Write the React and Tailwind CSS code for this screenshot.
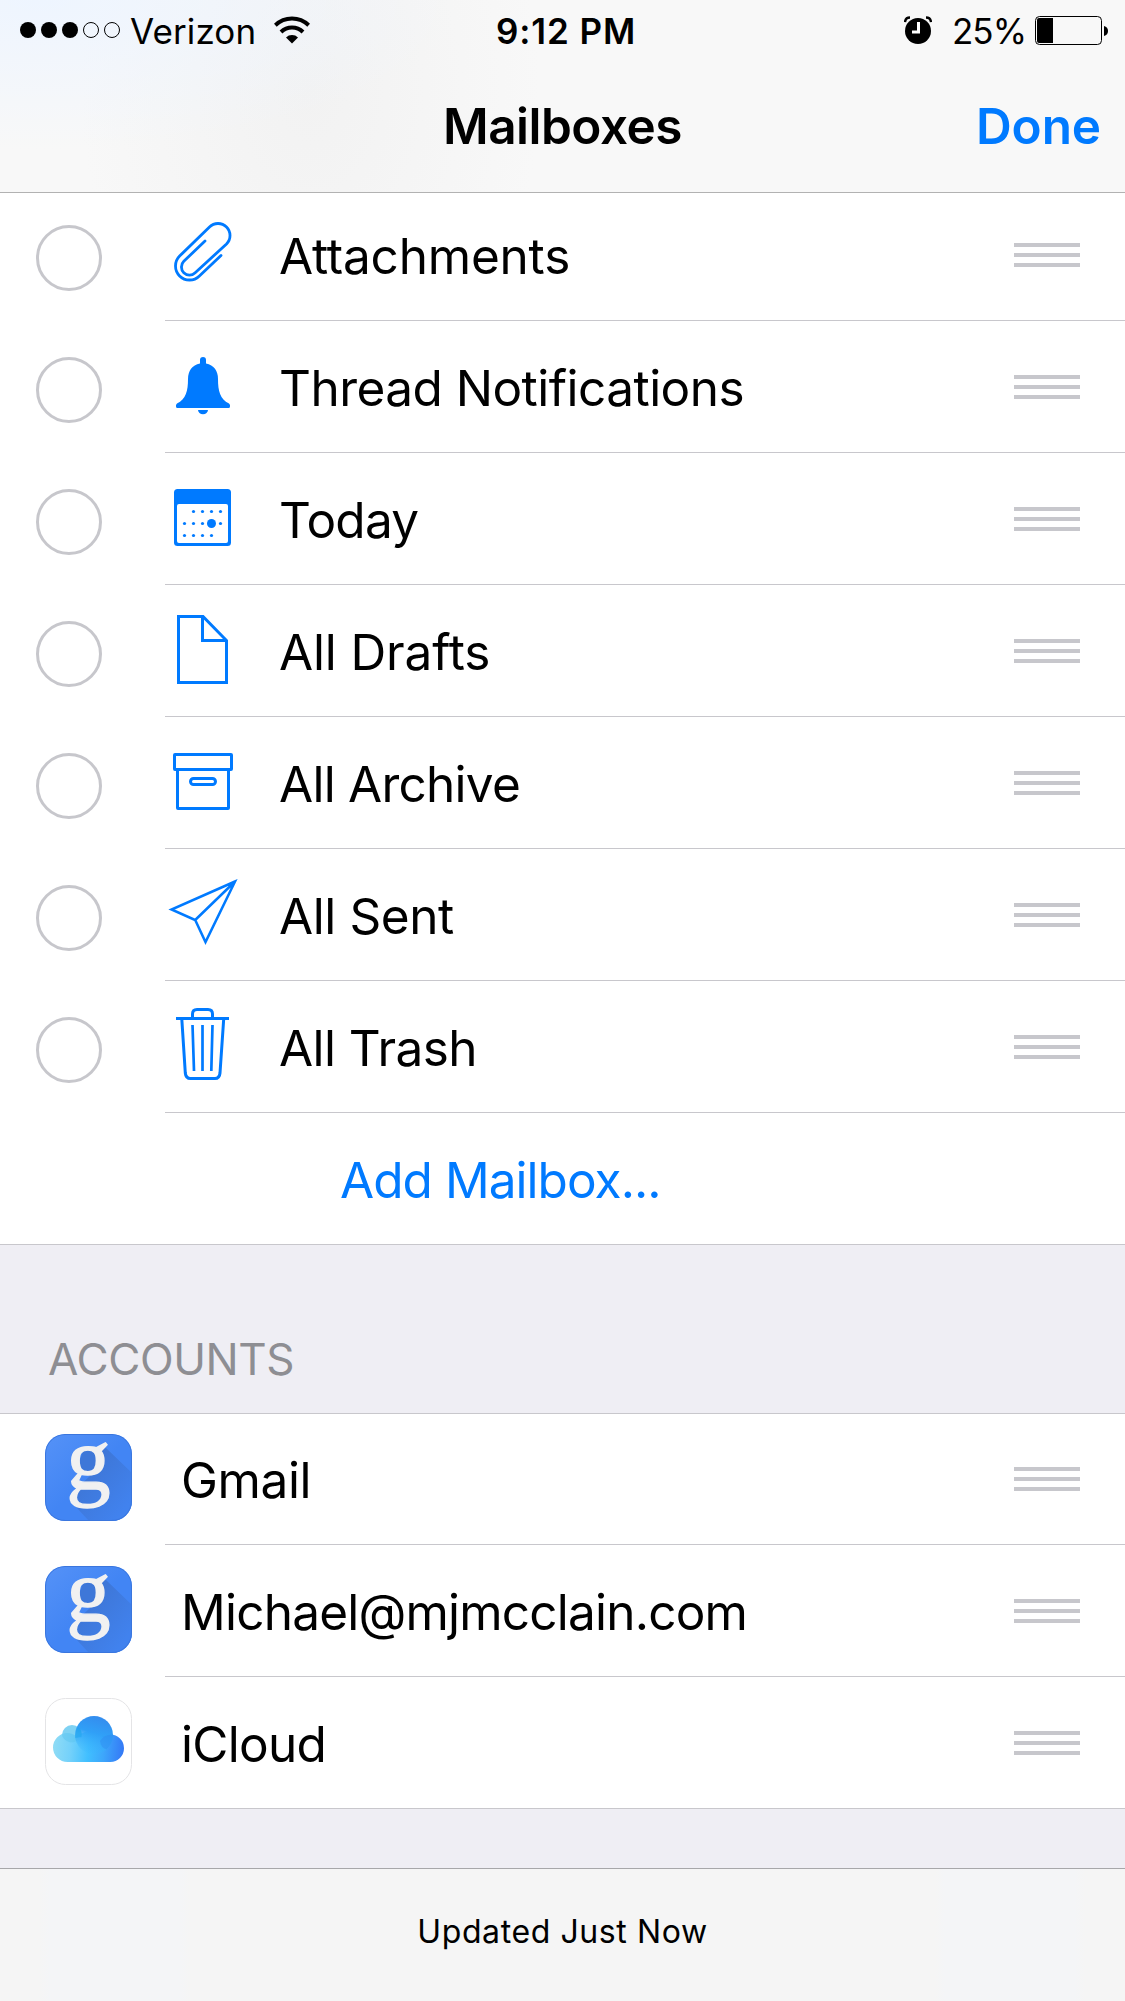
import { useState } from "react";

const MAILBOXES = [
  { name: "Attachments", icon: PaperclipIcon, text: "tracking-[-0.2px]" },
  { name: "Thread Notifications", icon: BellIcon, text: "tracking-[-0.53px]" },
  { name: "Today", icon: CalendarIcon, text: "tracking-[-0.7px]" },
  { name: "All Drafts", icon: DraftIcon, text: "tracking-[-0.15px]" },
  { name: "All Archive", icon: ArchiveIcon, text: "tracking-[-0.75px]" },
  { name: "All Sent", icon: SentIcon, text: "tracking-[-0.4px]" },
  { name: "All Trash", icon: TrashIcon, text: "tracking-[-0.55px]" },
];

const ACCOUNTS = [
  { name: "Gmail", icon: GoogleIcon, text: "tracking-[-0.4px]" },
  { name: "Michael@mjmcclain.com", icon: GoogleIcon, text: "tracking-[-0.78px]" },
  { name: "iCloud", icon: ICloudIcon, text: "tracking-[-0.7px]" },
];

export default function App() {
  const [selected, setSelected] = useState([]);

  const toggle = (name) => {
    setSelected((prev) =>
      prev.includes(name) ? prev.filter((n) => n !== name) : [...prev, name]
    );
  };

  return (
    <div className="flex flex-col w-[1125px] h-[2001px] overflow-hidden bg-[#efeef4] text-black font-['Inter','Liberation_Sans',sans-serif]">
      <header className="relative z-10 shrink-0 h-[193px] border-b border-[#b2b2b2] bg-[#f8f8f8] bg-[radial-gradient(ellipse_420px_150px_at_40px_0px,#eef5ff,transparent),radial-gradient(ellipse_230px_330px_at_310px_90px,#f2f2f2,transparent)]">
        <StatusBar />
        <div className="grid grid-cols-3 items-center h-[132px] pb-[1px] px-[24px] text-[49.5px] leading-[60px] font-semibold">
          <span />
          <h1 className="text-center tracking-[-0.5px]">Mailboxes</h1>
          <button className="text-right text-[#007aff] tracking-[-0.1px]">Done</button>
        </div>
      </header>

      <main className="grow">
        <section className="-mt-1 bg-white border-b border-[#c8c7cc]">
          {MAILBOXES.map((box) => (
            <MailboxRow
              key={box.name}
              box={box}
              checked={selected.includes(box.name)}
              onToggle={() => toggle(box.name)}
            />
          ))}
          <div className="flex h-[131px] items-center pt-[3px] pl-[340px]">
            <button className="text-[49.5px] leading-[60px] text-[#007aff] tracking-[-0.95px]">
              Add Mailbox...
            </button>
          </div>
        </section>

        <h2 className="h-[168px] pt-[84px] pl-[48px] text-[44px] leading-[60px] text-[#8e8e93] tracking-[-0.4px]">
          ACCOUNTS
        </h2>

        <section className="bg-white border-y border-[#c8c7cc]">
          {ACCOUNTS.map((account) => (
            <AccountRow key={account.name} account={account} />
          ))}
        </section>
      </main>

      <footer className="flex shrink-0 h-[133px] items-center justify-center border-t border-[#a7a7aa] bg-[#f5f5f5] bg-[linear-gradient(90deg,transparent_40px,#f4f5f7_50px,#f4f5f7_180px,transparent_190px,transparent_935px,#f4f5f7_945px,#f4f5f7_1075px,transparent_1085px)] pb-[7px]">
        <p className="text-[32px] leading-[40px] tracking-[0.6px]">Updated Just Now</p>
      </footer>
    </div>
  );
}

function StatusBar() {
  return (
    <div className="flex h-[60px] items-center pl-[20px] pr-[17px] text-[35px] leading-[40px]">
      <div className="flex flex-1 items-center">
        <div className="flex gap-[5px]">
          <span className="size-4 rounded-full bg-black" />
          <span className="size-4 rounded-full bg-black" />
          <span className="size-4 rounded-full bg-black" />
          <span className="size-4 rounded-full border border-black" />
          <span className="size-4 rounded-full border border-black" />
        </div>
        <span className="ml-[10px] mt-[2px] tracking-[0.1px]">Verizon</span>
        <WifiIcon />
      </div>
      <span className="ml-[4px] mt-[2px] font-semibold tracking-[0.9px]">9:12 PM</span>
      <div className="flex flex-1 items-center justify-end">
        <AlarmIcon />
        <span className="ml-[20px] mt-[2px] tracking-[-1px]">25%</span>
        <BatteryIcon />
      </div>
    </div>
  );
}

function MailboxRow({ box, checked, onToggle }) {
  const Icon = box.icon;
  return (
    <div className="flex h-[132px] pl-[36px]">
      <button
        onClick={onToggle}
        aria-label={box.name}
        className={`mt-[36px] size-[66px] shrink-0 rounded-full border-3 border-[#c7c7cc] ${checked ? "bg-[#007aff]" : ""}`}
      />
      <div className="ml-[63px] flex grow border-b border-[#c8c7cc] pr-[45px]">
        <Icon />
        <span className={`ml-[39px] mt-[37px] grow text-[49.5px] leading-[60px] ${box.text}`}>{box.name}</span>
        <Grip />
      </div>
    </div>
  );
}

function AccountRow({ account }) {
  const Icon = account.icon;
  return (
    <div className="group flex h-[132px] pl-[45px] first:-mt-px last:h-[131px]">
      <Icon />
      <div className="ml-[33px] flex grow border-b border-[#c8c7cc] pr-[45px] group-last:border-b-0">
        <span className={`ml-[16px] mt-[37px] grow text-[49.5px] leading-[60px] ${account.text}`}>
          {account.name}
        </span>
        <Grip />
      </div>
    </div>
  );
}

function Grip() {
  return (
    <div className="mt-[54px] flex w-[66px] shrink-0 flex-col gap-[6px]">
      <span className="h-1 bg-[#c7c7cc]" />
      <span className="h-1 bg-[#c7c7cc]" />
      <span className="h-1 bg-[#c7c7cc]" />
    </div>
  );
}

function IconBox({ children }) {
  return (
    <svg viewBox="0 0 75 84" className="mt-[24px] h-[84px] w-[75px] shrink-0" fill="none" stroke="#007aff" strokeWidth="3">
      {children}
    </svg>
  );
}

function PaperclipIcon() {
  return (
    <IconBox>
      <path
        d="M40 28 L18.8 48.3 A8 8 0 0 0 30.2 59.7 L61.5 31 A12 12 0 0 0 44.5 14 L14.6 43.1 A14 14 0 0 0 34.4 62.9 L56 42.5"
        strokeWidth="2.8"
        strokeLinecap="round"
      />
    </IconBox>
  );
}

function BellIcon() {
  return (
    <IconBox>
      <path
        d="M35 15 a3 3 0 0 1 6 0 V18.5 C49 20 53 26 53 34 C53 46 55 54 64 58.5 Q65 59.3 65 60.5 V61.5 Q65 63 63.5 63 H12.5 Q11 63 11 61.5 V60.5 Q11 59.3 12 58.5 C21 54 23 46 23 34 C23 26 27 20 35 18.5 Z"
        fill="#007aff"
        stroke="none"
      />
      <path d="M33 65 H43 A5 4.2 0 0 1 33 65 Z" fill="#007aff" stroke="none" />
    </IconBox>
  );
}

const DAYS = [
  [28.5, 34.5], [37.5, 34.5], [46.5, 34.5], [55.5, 34.5],
  [19.5, 46.5], [28.5, 46.5], [37.5, 46.5], [55.5, 46.5],
  [19.5, 58.5], [28.5, 58.5], [37.5, 58.5], [46.5, 58.5],
];

function CalendarIcon() {
  return (
    <IconBox>
      <g fill="#007aff" stroke="none">
        <rect x="9" y="12" width="57" height="57" rx="3.5" />
        <rect x="12" y="27" width="51" height="39" rx="2" fill="#fff" />
        {DAYS.map(([x, y]) => (
          <circle key={`${x}-${y}`} cx={x} cy={y} r="1.6" />
        ))}
        <circle cx="46.5" cy="46.5" r="4.5" />
      </g>
    </IconBox>
  );
}

function DraftIcon() {
  return (
    <IconBox>
      <path d="M13.5 7.5 H38 L61.5 31.5 V73.5 H13.5 Z" />
      <path d="M37.5 7.5 V31.5 H61.5" />
    </IconBox>
  );
}

function ArchiveIcon() {
  return (
    <IconBox>
      <rect x="9.5" y="13.5" width="57" height="15" rx="0.5" />
      <rect x="12.5" y="28.5" width="51" height="39" rx="0.5" />
      <rect x="25.5" y="37.5" width="25" height="6" rx="3" />
    </IconBox>
  );
}

function SentIcon() {
  return (
    <IconBox>
      <path d="M70 8.5 L6.5 36.5 L30.2 47 L40.5 69 Z M70 8.5 L30.2 47" strokeWidth="2.5" />
    </IconBox>
  );
}

function TrashIcon() {
  return (
    <IconBox>
      <path d="M11 13.5 H64" />
      <path d="M27.5 13 V9 Q27.5 4.5 32 4.5 H43 Q47.5 4.5 47.5 9 V13" />
      <path d="M16.8 14 L20.3 68 Q20.8 73.5 25.5 73.5 H50 Q54.5 73.5 55 68 L58.7 14" />
      <path d="M27.5 20 L29 66 M37.5 20 V66 M47.5 20 L46.3 66" strokeWidth="2.7" />
    </IconBox>
  );
}

function WifiIcon() {
  return (
    <svg viewBox="0 0 36 28" className="ml-[18px] h-[28px] w-[36px]" fill="none" stroke="#000" strokeWidth="4">
      <path d="M1.3 9.2 A24 24 0 0 1 34.7 9.2" />
      <path d="M7 16 A15.8 15.8 0 0 1 29 16" />
      <path d="M12 21.5 A8.6 8.6 0 0 1 24 21.5 L18 27.5 Z" fill="#000" stroke="none" />
    </svg>
  );
}

function AlarmIcon() {
  return (
    <svg viewBox="0 0 28 28" className="h-[28px] w-[28px]">
      <circle cx="14" cy="15" r="13" />
      <path d="M1 6 Q1.5 1.5 6 1.5 M27 6 Q26.5 1.5 22 1.5" fill="none" stroke="#000" strokeWidth="2.4" />
      <path d="M14.5 6 V16 H8" fill="none" stroke="#fff" strokeWidth="3" />
    </svg>
  );
}

function BatteryIcon() {
  return (
    <svg viewBox="0 0 73 29" className="ml-[9px] h-[29px] w-[73px]">
      <rect x="0.5" y="0.5" width="66" height="28" rx="4" fill="none" stroke="#000" />
      <path d="M4 2 H18 V27 H4 Q2 27 2 25 V4 Q2 2 4 2 Z" />
      <path d="M69 10 Q73 11 73 15 Q73 19 69 20 Z" />
    </svg>
  );
}

function GoogleIcon() {
  return (
    <svg viewBox="0 0 87 87" className="mt-[21px] size-[87px] shrink-0 overflow-visible">
      <defs>
        <linearGradient id="tile" x1="0" y1="0" x2="1" y2="1">
          <stop offset="0" stopColor="#5592f7" />
          <stop offset="0.5" stopColor="#4285f4" />
          <stop offset="1" stopColor="#4285f4" />
        </linearGradient>
        <linearGradient id="shade" x1="0" y1="0" x2="1" y2="1">
          <stop offset="0.3" stopColor="#3e77d8" />
          <stop offset="0.85" stopColor="#4182ee" />
        </linearGradient>
        <clipPath id="tileClip">
          <rect width="87" height="87" rx="20" />
        </clipPath>
      </defs>
      <g clipPath="url(#tileClip)">
        <rect width="87" height="87" fill="url(#tile)" />
        <path d="M61 14 L87 39 V87 H44 L30 72 L32 54 L45 42 L32 34 L38 17 Z" fill="url(#shade)" />
        <rect x="0.5" y="0.5" width="86" height="86" rx="19.5" fill="none" stroke="#3b76dd" />
      </g>
      <text
        x="21.5"
        y="54.5"
        fontSize="88"
        fill="#f1f1f1"
        stroke="#f1f1f1"
        strokeWidth="1.4"
        className="font-['Liberation_Serif',serif]"
      >
        g
      </text>
    </svg>
  );
}

function ICloudIcon() {
  return (
    <svg viewBox="0 0 87 87" className="mt-[21px] size-[87px] shrink-0">
      <defs>
        <linearGradient id="cloud" gradientUnits="userSpaceOnUse" x1="8" y1="46" x2="79" y2="52">
          <stop offset="0" stopColor="#90dcf5" />
          <stop offset="0.25" stopColor="#74d1fa" />
          <stop offset="0.5" stopColor="#41bfff" />
          <stop offset="0.72" stopColor="#3da6fb" />
          <stop offset="1" stopColor="#3478f6" />
        </linearGradient>
        <linearGradient id="puff" gradientUnits="userSpaceOnUse" x1="56" y1="19" x2="44" y2="60">
          <stop offset="0" stopColor="#348cee" />
          <stop offset="0.4" stopColor="#30a0f7" />
          <stop offset="1" stopColor="#3cbcff" stopOpacity="0" />
        </linearGradient>
      </defs>
      <rect x="0.5" y="0.5" width="86" height="86" rx="20" fill="#fff" stroke="#e4e4e6" />
      <circle cx="27" cy="37" r="10" fill="#7fd2f3" />
      <path d="M22.5 64 A14.5 14.5 0 0 1 22.5 35 Q27 35 31 38 L49 30 L65.3 36.6 A13.7 13.7 0 0 1 65.3 64 Z" fill="url(#cloud)" />
      <path d="M17.2 36 A14.5 14.5 0 0 1 34 41 A10 10 0 0 1 17.2 38 Z" fill="#5cc4ee" opacity="0.5" />
      <circle cx="49" cy="37" r="19" fill="url(#puff)" />
      <path d="M30.2 40 A19 19 0 0 1 33 28.9 A10 10 0 0 1 36.5 39 Z" fill="#1ea6ec" opacity="0.55" />
      <path d="M55 43 A13.7 13.7 0 0 1 67.9 36.8 A19 19 0 0 1 61.5 51.2 Q56 50 55 43 Z" fill="#2d80ee" opacity="0.35" />
    </svg>
  );
}
